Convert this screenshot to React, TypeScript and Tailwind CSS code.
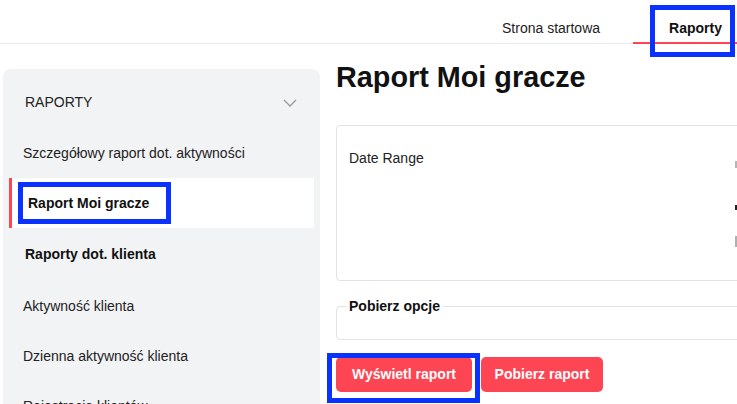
import React from "react";

const sideItems = [
  { label: "Szczegółowy raport dot. aktywności", kind: "normal" },
  { label: "Raport Moi gracze", kind: "active" },
  { label: "Raporty dot. klienta", kind: "group" },
  { label: "Aktywność klienta", kind: "normal" },
  { label: "Dzienna aktywność klienta", kind: "normal" },
  { label: "Rejestracja klientów", kind: "normal" },
];

const Sidebar: React.FC = () => {
  return (
    <aside className="ml-[3px] mt-[25px] w-[317px] shrink-0 rounded-t-lg bg-[#f2f3f5]">
      <div className="flex h-[59px] items-start justify-between pl-[22px] pr-[23px] pt-[23px]">
        <span className="text-[14px] leading-[20px] text-[#222]">RAPORTY</span>
        <svg width="14" height="8" viewBox="0 0 14 8" className="mt-[7px]">
          <path d="M1 1l6 6 6-6" fill="none" stroke="#9a9a9a" strokeWidth="1.3" />
        </svg>
      </div>
      <ul className="px-[6px]">
        {sideItems.map((item) =>
          item.kind === "active" ? (
            <li
              key={item.label}
              className="flex h-[50px] items-center border-l-[3px] border-[#fe4553] bg-white pl-[16px] text-[14px] font-bold text-[#111]"
            >
              {item.label}
            </li>
          ) : item.kind === "group" ? (
            <li key={item.label} className="flex h-[53px] items-center pl-[16px] text-[14px] font-bold text-[#111]">
              {item.label}
            </li>
          ) : (
            <li key={item.label} className="flex h-[50px] items-center pl-[14px] text-[14px] text-[#222]">
              {item.label}
            </li>
          )
        )}
      </ul>
    </aside>
  );
};

export default function App() {
  return (
    <div className="relative h-[404px] w-[737px] overflow-hidden bg-white font-['Liberation_Sans',Arial,sans-serif] text-[#1a1a1a]">
      {/* ----- top nav ----- */}
      <header className="flex h-[44px] w-[820px] items-start border-b border-[#ececec] pl-[469px]">
        <div className="h-[44px] px-[33px] pt-[18px] text-[14px] leading-[20px] text-[#222]">Strona startowa</div>
        <div className="-mb-px h-[44px] border-b-2 border-[#fe4553] px-[36px] pt-[18px] text-[14px] font-bold leading-[20px] text-[#111]">
          Raporty
        </div>
      </header>

      <div className="flex w-[820px]">
        <Sidebar />

        <main className="ml-[16px] w-[480px] pt-[16px]">
          <h1 className="text-[28.8px] font-bold leading-[34px] text-[#111]">Raport Moi gracze</h1>

          <section className="mt-[31px] flex h-[156px] w-[470px] rounded-[4px] border border-[#e3e3e3] pl-[12px] pt-[22px]">
            <div className="w-[386px] text-[14px] leading-[20px] text-[#222]">Date Range</div>
            <div className="flex flex-col pt-[13px]">
              <div className="h-[7px] w-[2px] bg-[#b5b5b5]" />
              <div className="mt-[37px] h-[5px] w-[2px] bg-[#222]" />
              <div className="mt-[26px] h-[11px] w-[2px] bg-[#b0b0b0]" />
            </div>
          </section>

          <fieldset className="mt-[15px] h-[44px] w-[470px] rounded-[4px] border border-[#e3e3e3] px-[9px]">
            <legend className="px-[3px] text-[14px] font-bold leading-[20px] text-[#111]">Pobierz opcje</legend>
          </fieldset>

          <div className="mt-[17px] flex gap-[9px]">
            <button
              type="button"
              className="h-[35px] w-[136px] rounded-[5px] bg-[#fe4553] text-[14px] font-bold text-white"
            >
              Wyświetl raport
            </button>
            <button
              type="button"
              className="h-[35px] w-[122px] rounded-[5px] bg-[#fe4553] text-[14px] font-bold text-white"
            >
              Pobierz raport
            </button>
          </div>
        </main>
      </div>

      {/* ----- highlight boxes ----- */}
      <div className="absolute left-[650px] top-[5px] h-[52px] w-[85px] border-[5px] border-[#0a32ff]" />
      <div className="absolute left-[18px] top-[182px] h-[42px] w-[153px] border-[5px] border-[#0a32ff]" />
      <div className="absolute left-[327px] top-[353px] h-[50px] w-[153px] border-[5px] border-[#0a32ff]" />
    </div>
  );
}
